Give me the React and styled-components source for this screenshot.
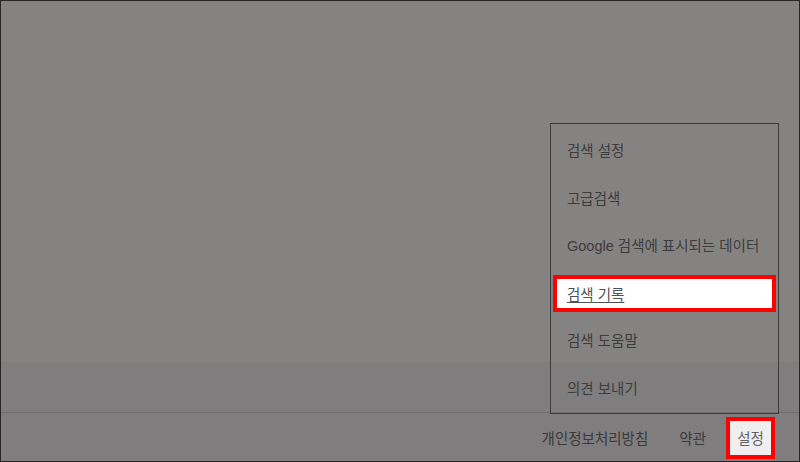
import React from 'react';
import styled, { createGlobalStyle } from 'styled-components';

const GlobalStyle = createGlobalStyle`
    html, body {
        margin: 0;
        padding: 0;
        background: #858382;
    }
    * {
        box-sizing: border-box;
    }
`;

const Page = styled.div`
    position: relative;
    width: 800px;
    height: 462px;
    border: 1px solid #262626;
    background: #858382;
    display: flex;
    flex-direction: column;
    font-family: 'Liberation Sans', 'Noto Sans CJK KR', sans-serif;
    overflow: hidden;
`;

const Main = styled.div`
    flex: 1;
`;

const Footer = styled.footer`
    background: #7f7d7e;
    display: flex;
    flex-direction: column;
`;

const FooterTop = styled.div`
    height: 51px;
    border-bottom: 1px solid #6f6d6e;
`;

const FooterLinks = styled.div`
    height: 48px;
    display: flex;
    justify-content: flex-end;
    align-items: center;
    padding-right: 24px;
`;

const FooterLink = styled.a`
    font-size: 14.5px;
    color: #3a3939;
    text-decoration: none;
    margin-right: ${p => p.$gap || 0}px;
`;

const ActiveLink = styled.a`
    width: 49px;
    height: 42px;
    margin-top: 1px;
    background: #efefef;
    border: 4px solid #ff0000;
    display: flex;
    align-items: center;
    justify-content: center;
    font-size: 14.5px;
    color: #5f6368;
    text-decoration: none;
`;

const Menu = styled.div`
    position: absolute;
    left: 549px;
    top: 122px;
    width: 229px;
    height: 291px;
    border: 1px solid #3c3c3c;
    padding: 2px 0;
    display: flex;
    flex-direction: column;
`;

const MenuItem = styled.a`
    height: 47.5px;
    display: flex;
    align-items: center;
    font-size: 14.5px;
    color: #3d3c3c;
    text-decoration: none;
    padding-left: 16px;
    white-space: nowrap;
`;

const HighlightItem = styled.div`
    height: 47.5px;
    display: flex;
    align-items: center;
    padding: 0 2px 0 2px;
`;

const HighlightBox = styled.a`
    flex: 1;
    height: 37px;
    margin-top: 2px;
    background: #ffffff;
    border: 4px solid #ff0000;
    display: flex;
    align-items: center;
    padding-left: 10px;
    font-size: 14.5px;
    color: #4d5156;
    text-decoration: underline;
    text-underline-offset: 2px;
`;

const items = ['검색 설정', '고급검색', 'Google 검색에 표시되는 데이터', '검색 기록', '검색 도움말', '의견 보내기'];

export default function App() {
    return (
        <>
            <GlobalStyle />
            <Page>
                <Main />
                <Footer>
                    <FooterTop />
                    <FooterLinks>
                        <FooterLink $gap={31}>개인정보처리방침</FooterLink>
                        <FooterLink $gap={20}>약관</FooterLink>
                        <ActiveLink>설정</ActiveLink>
                    </FooterLinks>
                </Footer>
                <Menu>
                    {items.map(label =>
                        label === '검색 기록' ? (
                            <HighlightItem key={label}>
                                <HighlightBox>{label}</HighlightBox>
                            </HighlightItem>
                        ) : (
                            <MenuItem key={label}>{label}</MenuItem>
                        )
                    )}
                </Menu>
            </Page>
        </>
    );
}
